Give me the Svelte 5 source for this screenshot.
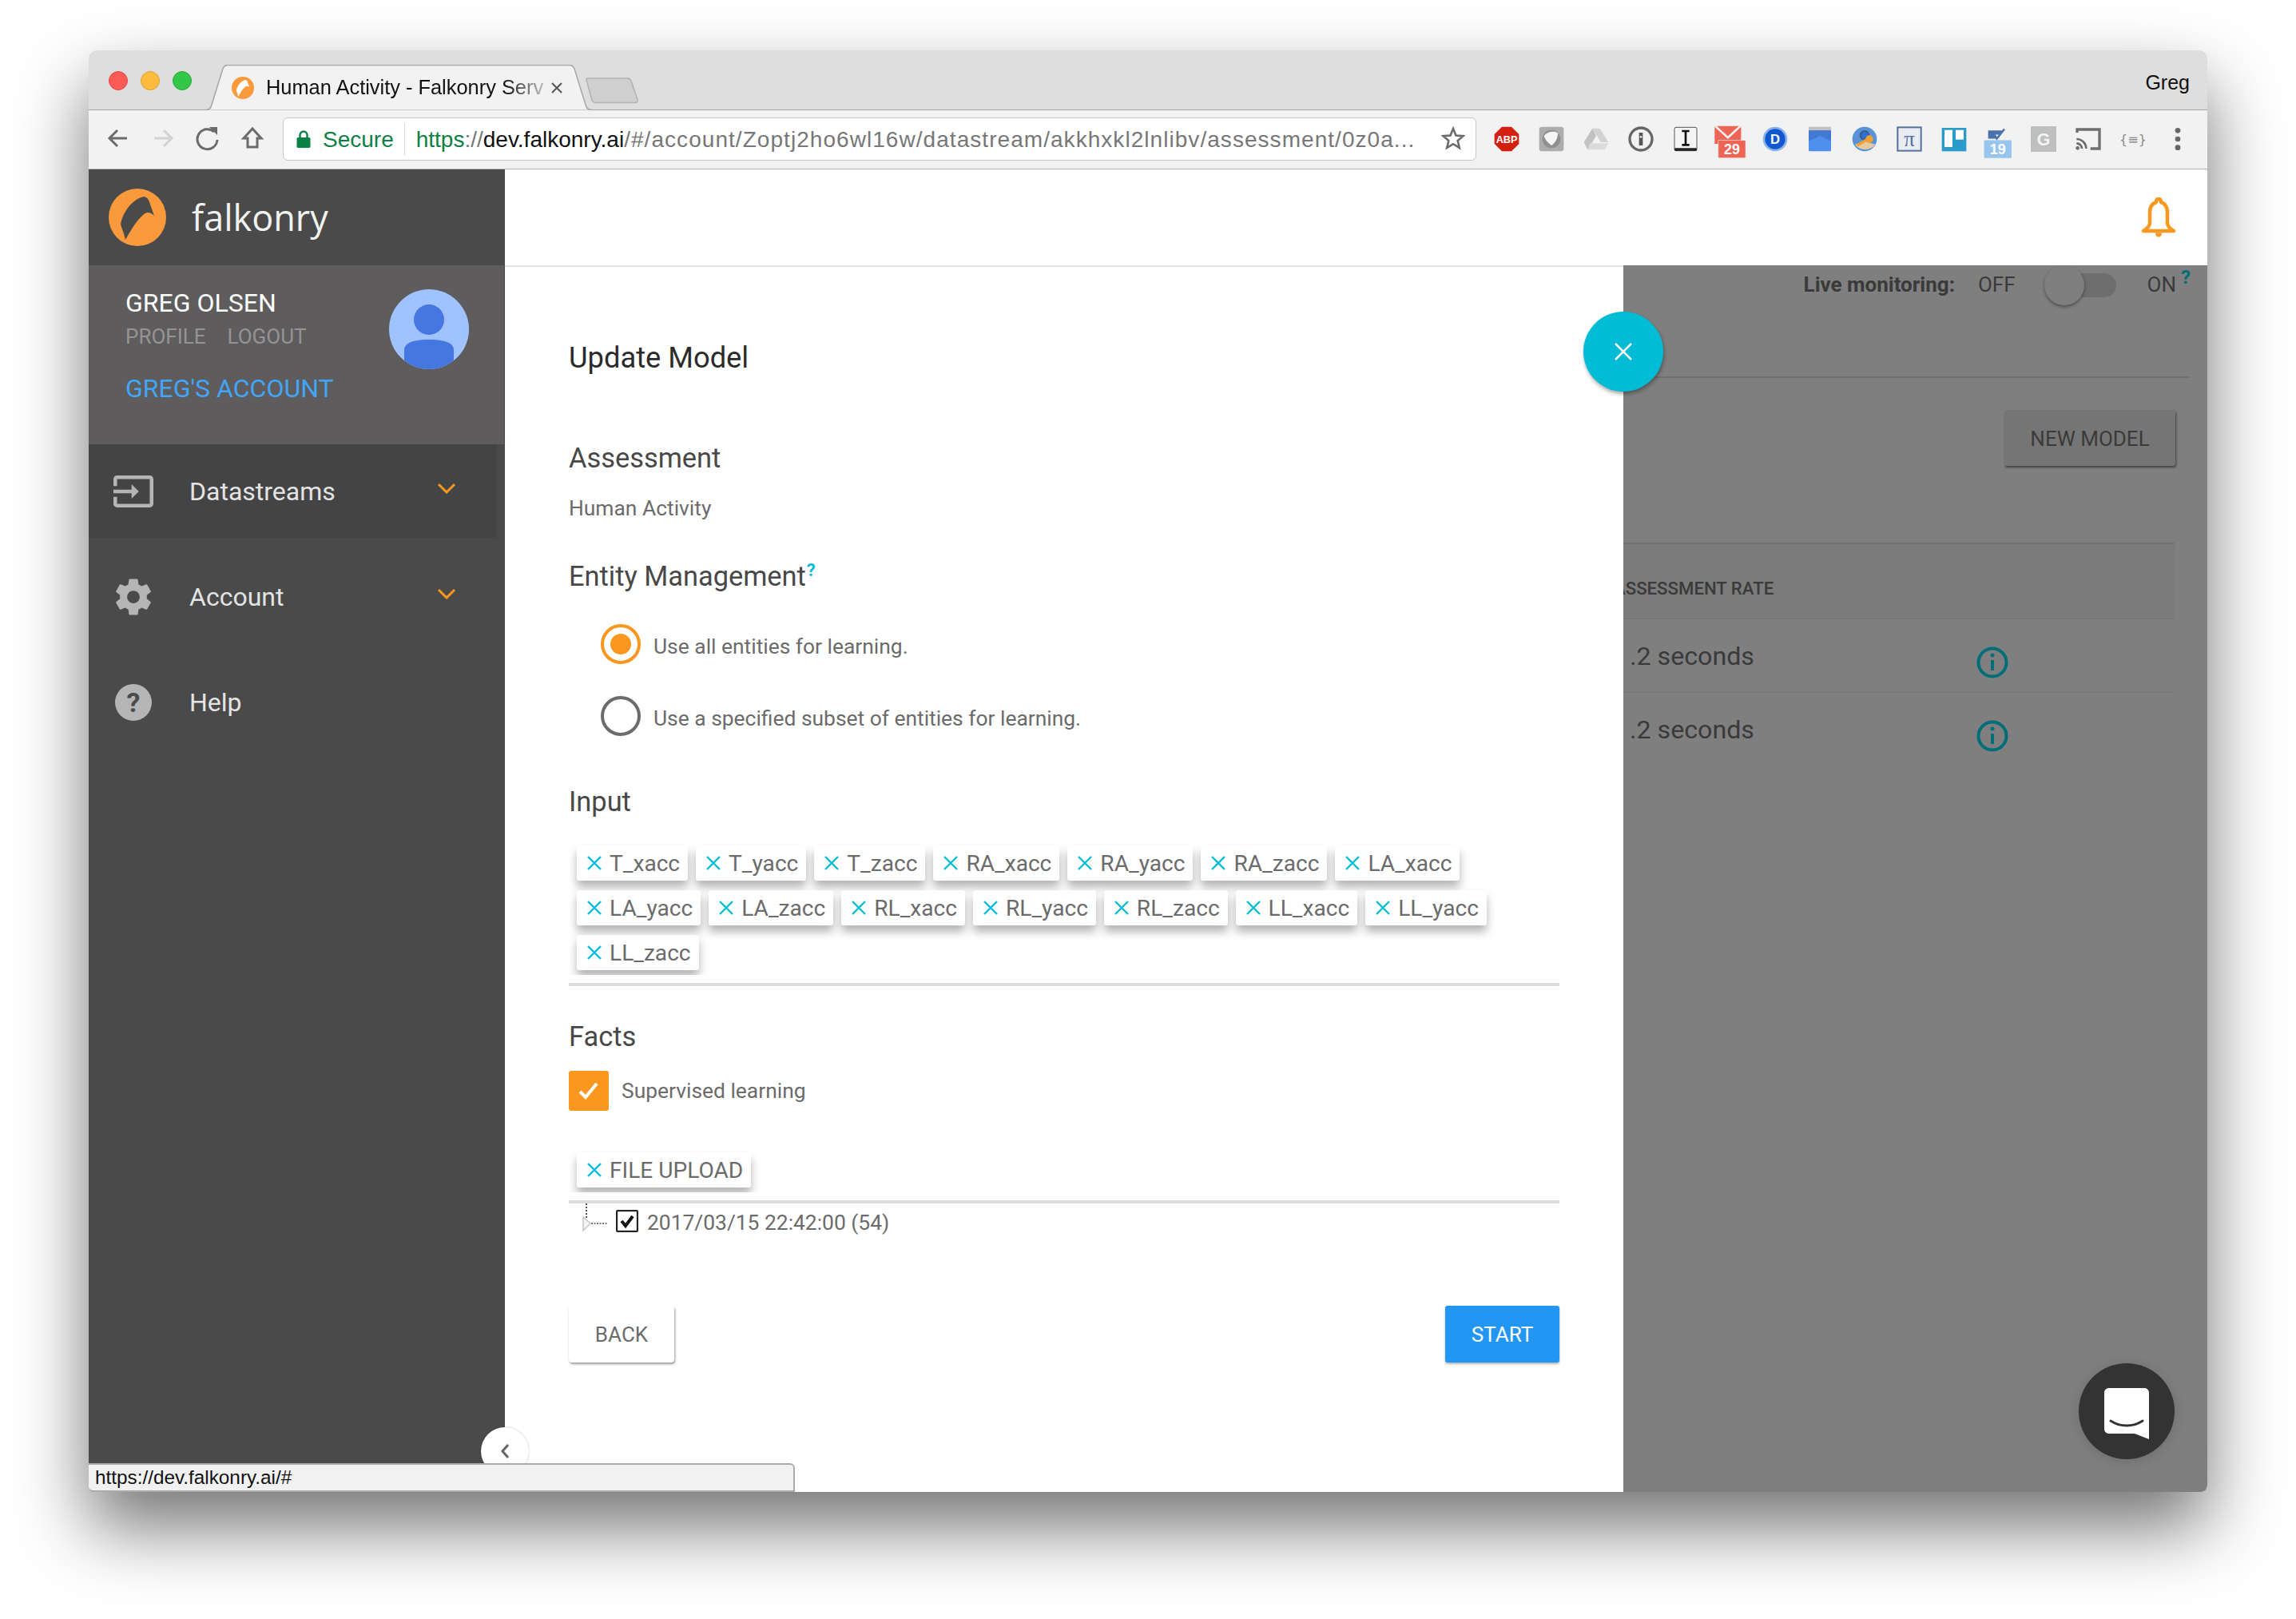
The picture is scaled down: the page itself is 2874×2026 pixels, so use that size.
<script>
  const inputs = [
    'T_xacc', 'T_yacc', 'T_zacc', 'RA_xacc', 'RA_yacc', 'RA_zacc', 'LA_xacc',
    'LA_yacc', 'LA_zacc', 'RL_xacc', 'RL_yacc', 'RL_zacc', 'LL_xacc', 'LL_yacc',
    'LL_zacc'
  ];
  const rates = ['.2 seconds', '.2 seconds'];
</script>

{#snippet falcon(size, cut)}
  <svg width={size} height={size} viewBox="0 0 72 72">
    <circle cx="36" cy="36" r="36" fill="#fb9a3c" />
    <path fill={cut} d="M44 10C49 11 51 15 52 20L57 34C52 29 47 29 43 33C34 41 28 52 21 64C19 54 15 47 15 44C18 30 28 14 44 10Z" />
  </svg>
{/snippet}

{#snippet cross()}
  <svg class="x" width="20" height="20" viewBox="0 0 20 20">
    <path d="M2 2L18 18M18 2L2 18" stroke="#00bcd4" stroke-width="2.4" fill="none" />
  </svg>
{/snippet}

<div class="page">
  <div class="window">
    <div class="tabstrip">
      <div class="lights">
        <i class="red"></i><i class="amber"></i><i class="green"></i>
      </div>
      <div class="tab">
        <svg class="tabshape" width="484" height="57" viewBox="0 0 484 57">
          <path d="M0 56.5H1C5 56.5 7 54 8 50L22 5C23 2 25 0.5 29 0.5H455C459 0.5 461 2 462 5L476 50C477 54 479 56.5 483 56.5H484" fill="#f2f2f2" stroke="#a6a6a6" stroke-width="1.5" />
        </svg>
        <span class="favicon">{@render falcon(28, '#fff')}</span>
        <span class="tabtitle">Human Activity - Falkonry Serv</span>
        <svg class="tabclose" width="16" height="16" viewBox="0 0 16 16">
          <path d="M2 2L14 14M14 2L2 14" stroke="#555" stroke-width="2" />
        </svg>
      </div>
      <svg class="newtab" width="66" height="34" viewBox="0 0 66 34">
        <path d="M2 2H53C55 2 56 3 57 5L65 29C65.5 31 64.5 32.5 62 32.5H12C10 32.5 9 31.5 8 29.5L1 4C.7 3 1 2 2 2Z" fill="#cfcfcf" stroke="#b2b2b2" stroke-width="1.5" />
      </svg>
      <span class="profile">Greg</span>
    </div>

    <div class="toolbar">
      <div class="navs">
        <svg width="56" height="40" viewBox="0 0 56 40"><path d="M39 20H18M27 10L17 20L27 30" fill="none" stroke="#6b6b6b" stroke-width="3" /></svg>
        <svg width="56" height="40" viewBox="0 0 56 40"><path d="M17 20H38M29 10L39 20L29 30" fill="none" stroke="#d2d2d2" stroke-width="3" /></svg>
        <svg width="56" height="40" viewBox="0 0 56 40"><path d="M36 12A12.5 12.5 0 1 0 40 22" fill="none" stroke="#6b6b6b" stroke-width="3" /><path d="M30 6H40V16Z" fill="#6b6b6b" /></svg>
        <svg width="56" height="40" viewBox="0 0 56 40"><path d="M28 8L17 20H22V31H34V20H39Z" fill="none" stroke="#6b6b6b" stroke-width="3" /></svg>
      </div>
      <div class="omnibox">
        <svg class="lock" width="18" height="24" viewBox="0 0 18 24">
          <path d="M4.5 11V7A4.5 4.5 0 0 1 13.5 7V11" fill="none" stroke="#0b8043" stroke-width="2.4" />
          <rect x="0.5" y="10" width="17" height="13" rx="1.5" fill="#0b8043" />
        </svg>
        <span class="secure">Secure</span>
        <span class="sep"></span>
        <span class="url"><b class="scheme">https</b><span class="mute">://</span><b class="host">dev.falkonry.ai</b><span class="mute path">/#/account/Zoptj2ho6wl16w/datastream/akkhxkl2lnlibv/assessment/0z0a...</span></span>
        <svg class="star" width="30" height="30" viewBox="0 0 30 30">
          <path d="M15 3L18.5 11.5L27.5 12.2L20.7 18L22.8 27L15 22.2L7.2 27L9.3 18L2.5 12.2L11.5 11.5Z" fill="none" stroke="#6b6b6b" stroke-width="2.6" />
        </svg>
      </div>
      <div class="exts">
        <span class="ext"><svg width="32" height="32" viewBox="0 0 48 48"><path d="M15 1H33L47 15V33L33 47H15L1 33V15Z" fill="#d4200f" /><text x="24" y="31" class="ext-t" font-size="19" fill="#fff">ABP</text></svg></span>
        <span class="ext"><svg width="32" height="32" viewBox="0 0 48 48"><rect x="1" y="1" width="46" height="46" rx="5" fill="#adadad" /><circle cx="24" cy="24" r="17" fill="#8f8f8f" /><path d="M10 18C16 10 30 8 36 13C36 24 30 32 24 36C18 31 12 26 10 18Z" fill="#f5f5f5" /></svg></span>
        <span class="ext"><svg width="32" height="32" viewBox="0 0 48 48"><path d="M17 4H31L47 30H33Z" fill="#d2d2d2" /><path d="M17 4L1 30L8 44L24 18Z" fill="#c2c2c2" /><path d="M13 32H47L40 44H8Z" fill="#dcdcdc" /></svg></span>
        <span class="ext"><svg width="32" height="32" viewBox="0 0 48 48"><circle cx="24" cy="24" r="21" fill="#f2f2f2" stroke="#666" stroke-width="5" /><path d="M24 12V36" stroke="#555" stroke-width="7" /><circle cx="24" cy="20" r="2" fill="#f2f2f2" /></svg></span>
        <span class="ext"><svg width="32" height="32" viewBox="0 0 48 48"><rect x="3" y="2" width="42" height="44" rx="3" fill="#f4f4f4" stroke="#555" stroke-width="1.5" /><rect x="3" y="41" width="42" height="5" rx="2" fill="#222" /><path d="M17 9H31M17 35H31M24 9V35" stroke="#111" stroke-width="4" /></svg></span>
        <span class="ext badge"><svg width="42" height="42" viewBox="0 0 66 66"><path d="M2 1H54V36H2Z" fill="#ee6555" /><path d="M3 1L28 24L53 1" fill="none" stroke="#f4f4f4" stroke-width="4" /><rect x="9" y="29" width="54" height="35" rx="2" fill="#ee6555" stroke="#f2f2f2" stroke-width="1" /><text x="36" y="57" class="ext-t" font-size="28" fill="#fff">29</text></svg></span>
        <span class="ext"><svg width="32" height="32" viewBox="0 0 48 48"><circle cx="24" cy="24" r="23" fill="#8db2ea" /><circle cx="24" cy="24" r="19" fill="#1158d0" /><text x="24" y="33" class="ext-t" font-size="25" fill="#fff">D</text></svg></span>
        <span class="ext"><svg width="32" height="32" viewBox="0 0 48 48"><rect x="3" y="1" width="42" height="8" fill="#c0c0c0" /><rect x="3" y="8" width="42" height="39" rx="2" fill="#4e90ee" /><path d="M3 8H45V28L24 18L3 28Z" fill="#4279d4" /></svg></span>
        <span class="ext"><svg width="32" height="32" viewBox="0 0 48 48"><circle cx="24" cy="24" r="23" fill="#5a92d8" /><path d="M6 34A23 23 0 0 0 44 34L24 28Z" fill="#e6c9a0" /><circle cx="24" cy="17" r="8" fill="#2f6fd2" stroke="#3a5a90" stroke-width="3" /><path d="M10 36L30 24" stroke="#f2a12e" stroke-width="5" /><circle cx="33" cy="24" r="7" fill="#f2a12e" /></svg></span>
        <span class="ext"><svg width="32" height="32" viewBox="0 0 48 48"><rect x="2" y="2" width="44" height="44" fill="#e9ecf3" stroke="#56719f" stroke-width="3" /><text x="24" y="37" class="ext-serif" font-size="40" fill="#56719f">π</text></svg></span>
        <span class="ext"><svg width="32" height="32" viewBox="0 0 48 48"><rect x="1" y="3" width="46" height="44" fill="#2b9bc9" /><rect x="6" y="7" width="15" height="32" fill="#fff" /><rect x="27" y="7" width="15" height="18" fill="#fff" /></svg></span>
        <span class="ext badge"><svg width="42" height="42" viewBox="0 0 66 66"><path d="M12 10H40L34 18H24L28 26H12Z" fill="#4a72ad" /><path d="M24 18L29 26L44 7" fill="none" stroke="#4a72ad" stroke-width="4" /><rect x="4" y="29" width="54" height="35" rx="2" fill="#97c5ee" /><text x="31" y="57" class="ext-t" font-size="28" fill="#fff">19</text></svg></span>
        <span class="ext"><svg width="32" height="32" viewBox="0 0 48 48"><rect x="0" y="0" width="48" height="48" rx="1" fill="#bfbfbf" /><text x="24" y="36" class="ext-t" font-size="32" fill="#f4f4f4">G</text></svg></span>
        <span class="ext"><svg width="32" height="32" viewBox="0 0 48 48"><path d="M3 12V6H45V42H28" fill="none" stroke="#6e6e6e" stroke-width="5" /><path d="M2 24A18 18 0 0 1 20 42M2 32A10 10 0 0 1 12 42" fill="none" stroke="#6e6e6e" stroke-width="4" /><circle cx="4" cy="41" r="3.5" fill="#6e6e6e" /></svg></span>
        <span class="ext curly">{'{≡}'}</span>
        <span class="ext"><svg width="8" height="32" viewBox="0 0 12 48"><circle cx="6" cy="8" r="5" fill="#666" /><circle cx="6" cy="24" r="5" fill="#666" /><circle cx="6" cy="40" r="5" fill="#666" /></svg></span>
      </div>
    </div>

    <div class="app">
      <aside class="sidebar">
        <div class="brand">
          {@render falcon(72, '#4a4a4a')}
          <span class="wordmark">falkonry</span>
        </div>
        <div class="user">
          <div class="who">
            <div class="name">GREG OLSEN</div>
            <div class="links"><span>PROFILE</span><span>LOGOUT</span></div>
            <div class="acct">GREG'S ACCOUNT</div>
          </div>
          <svg class="avatar" width="100" height="100" viewBox="0 0 100 100">
            <defs><clipPath id="av"><circle cx="50" cy="50" r="50" /></clipPath></defs>
            <circle cx="50" cy="50" r="50" fill="#a0c3ff" />
            <g clip-path="url(#av)" fill="#4477e0">
              <circle cx="50" cy="38" r="19" />
              <path d="M19 100V76C19 65 36 63 50 63C64 63 81 65 81 76V100Z" />
            </g>
          </svg>
        </div>
        <nav class="menu">
          <div class="item active">
            <span class="icon">
              <svg width="50" height="40" viewBox="1 3 22 18" preserveAspectRatio="none"><path fill="#b5b5b5" d="M21 3.01H3c-1.1 0-2 .9-2 2V9h2V4.99h18v14.03H3V15H1v4.01c0 1.1.9 1.98 2 1.98h18c1.1 0 2-.88 2-1.98v-14c0-1.11-.9-2-2-2zM11 16l4-4-4-4v3H1v2h10v3z" /></svg>
            </span>
            <span class="label">Datastreams</span>
            <svg class="chev" width="24" height="14" viewBox="0 0 24 14"><path d="M2 2L12 12L22 2" fill="none" stroke="#f9971e" stroke-width="3" /></svg>
          </div>
          <div class="item">
            <span class="icon">
              <svg width="54" height="54" viewBox="0 0 24 24"><path fill="#b5b5b5" d="M19.43 12.98c.04-.32.07-.64.07-.98s-.03-.66-.07-.98l2.11-1.65c.19-.15.24-.42.12-.64l-2-3.46c-.12-.22-.39-.3-.61-.22l-2.49 1c-.52-.4-1.08-.73-1.69-.98l-.38-2.65C14.46 2.18 14.25 2 14 2h-4c-.25 0-.46.18-.49.42l-.38 2.65c-.61.25-1.17.59-1.69.98l-2.49-1c-.23-.09-.49 0-.61.22l-2 3.46c-.13.22-.07.49.12.64l2.11 1.65c-.04.32-.07.65-.07.98s.03.66.07.98l-2.11 1.65c-.19.15-.24.42-.12.64l2 3.46c.12.22.39.3.61.22l2.49-1c.52.4 1.08.73 1.69.98l.38 2.65c.03.24.24.42.49.42h4c.25 0 .46-.18.49-.42l.38-2.65c.61-.25 1.17-.59 1.69-.98l2.49 1c.23.09.49 0 .61-.22l2-3.46c.12-.22.07-.49-.12-.64l-2.11-1.65zM12 15.5c-1.93 0-3.5-1.57-3.5-3.5s1.57-3.5 3.5-3.5 3.5 1.57 3.5 3.5-1.57 3.5-3.5 3.5z" /></svg>
            </span>
            <span class="label">Account</span>
            <svg class="chev" width="24" height="14" viewBox="0 0 24 14"><path d="M2 2L12 12L22 2" fill="none" stroke="#f9971e" stroke-width="3" /></svg>
          </div>
          <div class="item">
            <span class="icon"><span class="helpdot">?</span></span>
            <span class="label">Help</span>
          </div>
        </nav>
      </aside>

      <div class="content">
        <header class="topbar">
          <svg width="44" height="50" viewBox="0 0 44 50">
            <path d="M22 2C20 2 19 3.5 19 6C13 8 11 12 11 19V32C11 36 8 39 3 42H41C36 39 33 36 33 32V19C33 12 31 8 25 6C25 3.5 24 2 22 2Z" fill="none" stroke="#f9971e" stroke-width="4.5" stroke-linejoin="round" />
            <path d="M18 44.5H26C26 47.5 24.5 49.5 22 49.5C19.5 49.5 18 47.5 18 44.5Z" fill="#f9971e" />
          </svg>
        </header>
        <div class="stage">
          <section class="modal">
            <h1>Update Model</h1>
            <h2 class="h-assess">Assessment</h2>
            <p class="assess-name">Human Activity</p>
            <h2 class="h-entity">Entity Management<sup>?</sup></h2>
            <div class="radios">
              <div class="radio on"><span class="ring"><i></i></span><span>Use all entities for learning.</span></div>
              <div class="radio"><span class="ring"></span><span>Use a specified subset of entities for learning.</span></div>
            </div>
            <h2 class="h-input">Input</h2>
            <div class="chips chips-input">
              {#each inputs as name}
                <span class="chip">{@render cross()}{name}</span>
              {/each}
            </div>
            <div class="rule"></div>
            <h2 class="h-facts">Facts</h2>
            <div class="check">
              <span class="box"><svg width="30" height="30" viewBox="0 0 30 30"><path d="M4 16L11 23L25 6" fill="none" stroke="#fff" stroke-width="4" /></svg></span>
              <span>Supervised learning</span>
            </div>
            <div class="chips chips-file">
              <span class="chip">{@render cross()}FILE UPLOAD</span>
            </div>
            <div class="rule rule-file"></div>
            <div class="tree">
              <svg class="branch" width="34" height="38" viewBox="0 0 34 38">
                <path d="M5 0V24" stroke="#555" stroke-width="2" stroke-dasharray="2 2" />
                <path d="M11 25H31" stroke="#777" stroke-width="2" stroke-dasharray="2 1.5" />
                <path d="M1 17L10 25L1 34Z" fill="#f5f5f5" stroke="#c8c8c8" stroke-width="1.5" />
              </svg>
              <span class="treebox"><svg width="20" height="20" viewBox="0 0 20 20"><path d="M3 10L8 16L17 4" fill="none" stroke="#111" stroke-width="4" /></svg></span>
              <span class="treelabel">2017/03/15 22:42:00 (54)</span>
            </div>
            <div class="actions">
              <button class="back">BACK</button>
              <button class="start">START</button>
            </div>
            <button class="close" aria-label="Close">
              <svg width="24" height="24" viewBox="0 0 24 24"><path d="M2 2L22 22M22 2L2 22" stroke="#fff" stroke-width="2.5" /></svg>
            </button>
          </section>

          <section class="behind">
            <div class="live">
              <b>Live monitoring:</b>
              <span class="off">OFF</span>
              <span class="toggle"><i></i></span>
              <span>ON</span>
              <sup>?</sup>
            </div>
            <div class="line line-live"></div>
            <button class="newmodel">NEW MODEL</button>
            <div class="line line-table"></div>
            <div class="thead">ASSESSMENT RATE</div>
            {#each rates as rate}
              <div class="trow">
                <span class="rate">{rate}</span>
                <svg class="info" width="40" height="40" viewBox="0 0 40 40">
                  <circle cx="20" cy="20" r="17.5" fill="none" stroke="#00dcf0" stroke-width="4" />
                  <path d="M20 17V30" stroke="#00dcf0" stroke-width="4" />
                  <circle cx="20" cy="11" r="2.5" fill="#00dcf0" />
                </svg>
              </div>
            {/each}
            <div class="scrim"></div>
          </section>
        </div>
      </div>

      <div class="collapse">
        <svg width="12" height="20" viewBox="0 0 12 20"><path d="M10 2L3 10L10 18" fill="none" stroke="#666" stroke-width="3" /></svg>
      </div>
      <div class="status">https://dev.falkonry.ai/#</div>
      <div class="chat">
        <svg width="56" height="64" viewBox="0 0 56 64">
          <path d="M6 0H50C53.5 0 56 2.5 56 6V64L38 57H6C2.5 57 0 54.5 0 51V6C0 2.5 2.5 0 6 0Z" fill="#fff" />
          <path d="M8 41C20 49 36 49 48 41" fill="none" stroke="#333" stroke-width="3" stroke-linecap="round" />
        </svg>
      </div>
    </div>
  </div>
</div>

<style>
  :global(body) { margin: 0; background: #fff; }
  .page { width: 2874px; height: 2026px; padding: 63px 111px 159px; box-sizing: border-box; overflow: hidden; font-family: Roboto, sans-serif; }
  .window { height: 1804px; display: flex; flex-direction: column; border-radius: 10px 10px 8px 8px; background: #fff; box-shadow: 0 44px 90px rgba(0,0,0,.55); position: relative; }

  .tabstrip { height: 74px; flex: none; background: #dedede; border-radius: 10px 10px 0 0; border-bottom: 1px solid #a6a6a6; position: relative; display: flex; font-family: "Liberation Sans", sans-serif; }
  .lights { display: flex; gap: 16px; padding: 26px 0 0 25px; width: 146px; box-sizing: border-box; }
  .lights i { width: 24px; height: 24px; border-radius: 50%; box-sizing: border-box; }
  .red { background: #fc5b57; border: 1px solid #e2463f; }
  .amber { background: #fdbb40; border: 1px solid #e0a028; }
  .green { background: #33c748; border: 1px solid #27aa35; }
  .tab { width: 484px; height: 57px; margin-top: 18px; position: relative; display: flex; align-items: center; z-index: 1; }
  .tabshape { position: absolute; left: 0; top: 0; }
  .favicon { position: relative; margin-left: 33px; height: 28px; }
  .tabtitle { position: relative; margin-left: 15px; width: 347px; white-space: nowrap; font-size: 25.4px; color: #111; -webkit-mask-image: linear-gradient(90deg, #000 86%, rgba(0,0,0,.25) 100%); mask-image: linear-gradient(90deg, #000 86%, rgba(0,0,0,.25) 100%); }
  .tabclose { position: relative; margin-left: 9px; }
  .newtab { margin: 33px 0 0 -8px; }
  .profile { margin-left: auto; margin-right: 22px; line-height: 80px; font-size: 25px; color: #111; }

  .toolbar { height: 74px; flex: none; box-sizing: border-box; background: #f2f2f2; border-bottom: 1px solid #b4b4b4; display: flex; align-items: flex-start; padding-left: 9px; position: relative; }
  .navs { display: flex; width: 224px; margin-top: 15px; flex: none; }
  .omnibox { width: 1494px; height: 54px; margin: 9px 0 0 10px; box-sizing: border-box; flex: none; background: #fff; border: 1px solid #c6c6c6; border-radius: 6px; display: flex; align-items: center; font-family: "Liberation Sans", sans-serif; font-size: 28px; padding: 2px 0 0 16px; position: relative; }
  .lock { margin-top: -2px; }
  .secure { color: #0b8043; margin-left: 15px; }
  .sep { width: 1px; height: 40px; background: #dadada; margin: -2px 14px 0 13px; }
  .url { white-space: nowrap; }
  .url b { font-weight: 400; }
  .scheme { color: #0b8043; }
  .host { color: #111; }
  .mute { color: #777; }
  .path { letter-spacing: 1.05px; }
  .star { position: absolute; right: 13px; top: 10px; }
  .exts { display: flex; margin: 0 0 0 10px; }
  .ext { width: 56px; height: 72px; display: flex; align-items: center; justify-content: center; flex: none; }
  .ext svg { flex: none; }
  .badge { padding-top: 8px; box-sizing: border-box; }
  .ext-t { font-family: "Liberation Sans", sans-serif; font-weight: 700; text-anchor: middle; }
  .ext-serif { font-family: "Liberation Serif", serif; text-anchor: middle; }
  .curly { font-family: "DejaVu Sans", sans-serif; font-size: 16px; color: #8a8a8a; }

  .app { flex: 1; display: flex; position: relative; min-height: 0; }
  .sidebar { width: 521px; flex: none; background: #4a4a4a; border-radius: 0 0 0 8px; color: #fff; }
  .brand { height: 120px; display: flex; align-items: center; padding-left: 25px; }
  .wordmark { font-family: "Open Sans", sans-serif; font-size: 45px; margin: -2px 0 0 32px; color: #f2f2f2; }
  .user { height: 224px; box-sizing: border-box; background: #5e5c5c; padding: 29px 44px 0 46px; display: flex; justify-content: space-between; align-items: flex-start; margin-right: 1px; }
  .name { font-size: 32px; line-height: 36px; color: #fff; }
  .links { font-size: 26px; line-height: 30px; margin-top: 9px; color: #949494; display: flex; gap: 27px; }
  .acct { font-size: 32px; line-height: 36px; margin-top: 32px; color: #42a5f5; }
  .avatar { margin-top: 1px; }
  .menu { display: flex; flex-direction: column; gap: 15px; }
  .item { height: 117px; display: flex; align-items: center; padding-left: 28px; margin-right: 10px; position: relative; }
  .item.active { background: #444; }
  .icon { width: 56px; height: 56px; display: flex; align-items: center; justify-content: center; margin-right: 42px; }
  .helpdot { width: 46px; height: 46px; border-radius: 50%; background: #b5b5b5; color: #4a4a4a; font-weight: 700; font-size: 34px; line-height: 46px; text-align: center; }
  .label { font-size: 32px; color: #e4e4e4; }
  .chev { position: absolute; left: 436px; top: 48px; }

  .content { flex: 1; display: flex; flex-direction: column; min-width: 0; }
  .topbar { height: 120px; flex: none; box-sizing: border-box; padding: 35px 39px 0 0; display: flex; justify-content: flex-end; background: #fff; }
  .stage { flex: 1; display: flex; min-height: 0; }

  .modal { width: 1400px; flex: none; box-sizing: border-box; padding: 94px 80px 0 80px; background: #fff; border-top: 2px solid #e4e4e4; position: relative; z-index: 2; color: #6b6b6b; font-size: 26.4px; }
  h1 { margin: -2px 0 0; font-weight: 400; font-size: 36.3px; line-height: 44px; color: #2b2b2b; }
  h2 { margin: 0; font-weight: 400; font-size: 34.4px; line-height: 40px; color: #484848; }
  .h-assess { margin-top: 83px; }
  .assess-name { margin: 25px 0 0; line-height: 36px; }
  .h-entity { margin-top: 47px; }
  h2 sup { color: #00bcd4; font-size: 22px; font-weight: 700; line-height: 0; vertical-align: 12px; margin-left: 1px; }
  .radios { margin-top: 40px; padding-left: 40px; display: flex; flex-direction: column; gap: 40px; }
  .radio { height: 50px; display: flex; align-items: center; gap: 16px; }
  .radio > span:last-child { position: relative; top: 3px; }
  .ring { width: 50px; height: 50px; box-sizing: border-box; border-radius: 50%; border: 4px solid #6b6b6b; display: flex; align-items: center; justify-content: center; flex: none; }
  .on .ring { border-color: #f9971e; }
  .ring i { width: 26px; height: 26px; border-radius: 50%; background: #f9971e; }
  .h-input { margin-top: 62px; }
  .chips { overflow: hidden; display: flex; flex-wrap: wrap; gap: 12px 10px; padding: 10px 10px 6px; box-sizing: border-box; }
  .chips-input { margin-top: 25px; height: 172px; }
  .chips-file { margin-top: 42px; height: 60px; }
  .chip { height: 44px; display: inline-flex; align-items: center; gap: 9px; padding: 0 10px 0 12px; background: #fff; border-radius: 3px; box-shadow: 0 8px 12px rgba(0,0,0,.3); font-size: 28.1px; white-space: nowrap; color: #6b6b6b; }
  .x { flex: none; }
  .rule { height: 4px; background: #dcdcdc; margin-top: 10px; }
  .h-facts { margin-top: 43px; }
  .check { margin-top: 23px; height: 50px; display: flex; align-items: center; gap: 16px; }
  .box { width: 50px; height: 50px; border-radius: 3px; background: #f9971e; display: flex; align-items: center; justify-content: center; }
  .tree { height: 38px; display: flex; align-items: center; position: relative; padding-left: 59px; }
  .branch { position: absolute; left: 17px; top: 0; }
  .treebox { width: 28px; height: 28px; box-sizing: border-box; border: 2px solid #222; border-radius: 2px; margin: 6px 11px 0 0; display: flex; align-items: center; justify-content: center; background: #fff; box-shadow: inset 0 0 2px rgba(0,0,0,.5); }
  .treelabel { margin-top: 10px; }
  .actions { display: flex; justify-content: space-between; margin-top: 90px; }
  button { font-family: inherit; border: 0; cursor: pointer; }
  .back { width: 132px; height: 71px; background: #fff; color: #6b6b6b; font-size: 26px; border-radius: 4px; box-shadow: 1px 2px 3px rgba(0,0,0,.4); }
  .start { width: 143px; height: 71px; background: #2196f3; color: #fff; font-size: 26px; border-radius: 3px; box-shadow: 0 2px 3px rgba(0,0,0,.3); }
  .close { position: absolute; right: -50px; top: 56px; width: 100px; height: 100px; border-radius: 50%; background: #00bcd4; display: flex; align-items: center; justify-content: center; box-shadow: 1px 3px 5px rgba(0,0,0,.35); z-index: 3; }

  .behind { flex: 1; min-width: 0; position: relative; overflow: hidden; background: #fff; color: #757575; font-size: 26px; border-radius: 0 0 8px 0; }
  .live { height: 46px; box-sizing: border-box; padding: 2px 21px 0 0; display: flex; align-items: center; justify-content: flex-end; }
  .live b { font-weight: 700; margin-right: 29px; color: #747474; }
  .toggle { width: 90px; height: 30px; margin: 1px 39px 0 36px; background: #dcdcdc; border-radius: 15px; position: relative; }
  .toggle i { position: absolute; left: 0; top: -10px; width: 50px; height: 50px; border-radius: 50%; background: #fff; box-shadow: 0 2px 4px rgba(0,0,0,.4); }
  .live sup { color: #00dcf0; font-weight: 700; font-size: 24px; line-height: 0; margin: -18px 0 0 6px; }
  .line { height: 2px; background: #e2e2e2; }
  .line-live { margin: 93px 21px 0 0; }
  .newmodel { display: block; width: 214px; height: 70px; padding-top: 2px; margin: 40px 40px 0 auto; background: #ebebeb; color: #757575; font-size: 26px; border-radius: 3px; box-shadow: 1px 2px 3px rgba(0,0,0,.5); }
  .line-table { margin: 96px 41px 0 0; }
  .thead { height: 93px; margin: 0 41px 0 -12px; background: #f7f7f7; font-size: 22.2px; font-weight: 500; line-height: 110px; white-space: nowrap; }
  .trow { height: 92px; box-sizing: border-box; margin-right: 41px; border-top: 1px solid #eaeaea; position: relative; padding-left: 8px; font-size: 32.2px; line-height: 92px; }
  .info { position: absolute; left: 442px; top: 34px; }
  .scrim { position: absolute; inset: 0; background: rgba(0,0,0,.5); }

  .collapse { position: absolute; left: 491px; bottom: 21px; width: 60px; height: 60px; border-radius: 50%; background: #fff; display: flex; align-items: center; justify-content: center; box-shadow: 0 0 2px rgba(0,0,0,.3); z-index: 4; }
  .status { position: absolute; left: 0; bottom: 0; width: 884px; height: 36px; box-sizing: border-box; padding-left: 8px; background: #f1f1f1; border: 2px solid #aaa; border-left: 0; border-radius: 0 6px 0 6px; font: 24.3px/32px "Liberation Sans", sans-serif; color: #111; z-index: 5; }
  .chat { position: absolute; right: 41px; bottom: 41px; width: 120px; height: 120px; border-radius: 50%; background: #333; display: flex; align-items: center; justify-content: center; box-shadow: 0 2px 16px rgba(0,0,0,.15); z-index: 5; }
  .chat svg { margin-top: 6px; }
</style>
